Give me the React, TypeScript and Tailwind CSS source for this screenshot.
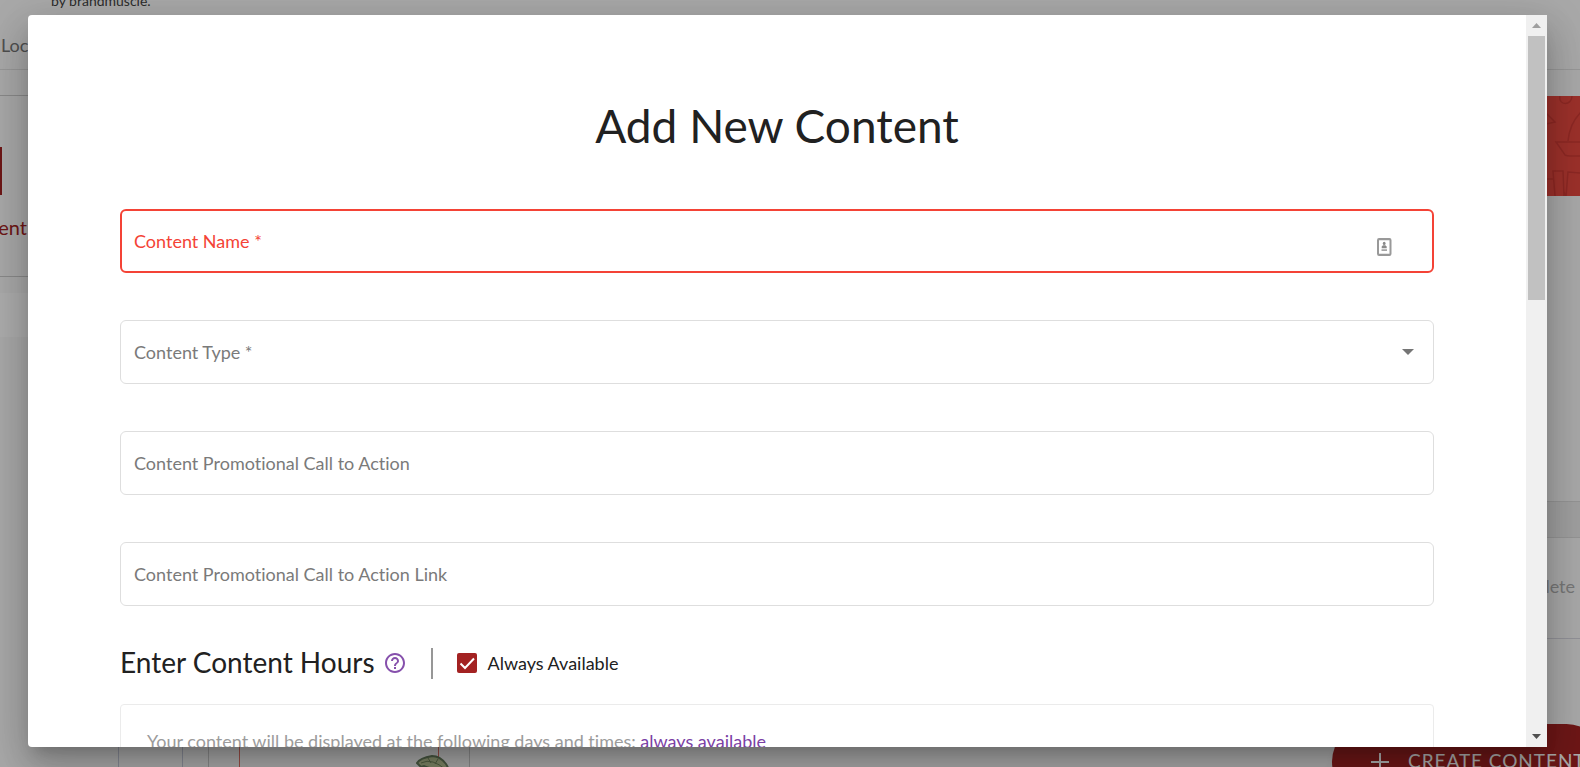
import type { ReactNode } from 'react';

export default function App() {
  return (
    <div className="relative h-screen overflow-hidden bg-[#fafafa] font-['Lato',sans-serif] text-[#212121] [font-variant-ligatures:none]">
      <Backdrop />
      <div className="absolute inset-0 flex bg-black/32 pt-[15px] pr-[33px] pb-5 pl-7">
        <ContentDialog />
      </div>
    </div>
  );
}

const ContentDialog = () => (
  <div
    role="dialog"
    aria-labelledby="dialog-title"
    className="flex min-w-0 flex-1 overflow-hidden rounded-l bg-white shadow-[0_11px_15px_-7px_rgba(0,0,0,0.2),0_24px_38px_3px_rgba(0,0,0,0.14),0_9px_46px_8px_rgba(0,0,0,0.12)]"
  >
    <form className="min-w-0 flex-1 overflow-hidden px-[92px] pt-[79px]">
      <h1 id="dialog-title" className="mb-[51px] text-center text-[46px] leading-16">
        Add New Content
      </h1>
      <div className="flex flex-col gap-[47px]">
        <Field id="name" label="Content Name *" error>
          <input id="name" className="min-w-0 flex-1 outline-none" />
          <ContactIcon />
        </Field>
        <Field id="type" label="Content Type *">
          <select id="type" defaultValue="" className="min-w-0 flex-1 appearance-none outline-none">
            <option value="" />
            <option value="promotion">Promotion</option>
          </select>
          <svg viewBox="0 0 12 6" className="mr-[6px] h-[6px] w-3 fill-[#757575]">
            <path d="M0 0h12L6 6z" />
          </svg>
        </Field>
        <Field id="cta" label="Content Promotional Call to Action">
          <input id="cta" className="min-w-0 flex-1 outline-none" />
        </Field>
        <Field id="cta-link" label="Content Promotional Call to Action Link">
          <input id="cta-link" className="min-w-0 flex-1 outline-none" />
        </Field>
      </div>
      <div className="mt-9 flex h-[42px] items-center">
        <h2 className="pb-[2px] text-[28px] leading-8">Enter Content Hours</h2>
        <button type="button" aria-label="Help" className="ml-2">
          <svg viewBox="0 0 24 24" className="size-6 fill-[#8650ac]">
            <path d="M11 18h2v-2h-2v2zm1-16C6.48 2 2 6.48 2 12s4.48 10 10 10 10-4.48 10-10S17.52 2 12 2zm0 18c-4.41 0-8-3.59-8-8s3.59-8 8-8 8 3.59 8 8-3.59 8-8 8zm0-14c-2.21 0-4 1.79-4 4h2c0-1.1.9-2 2-2s2 .9 2 2c0 2-3 1.75-3 5h2c0-2.25 3-2.5 3-5 0-2.21-1.79-4-4-4z" />
          </svg>
        </button>
        <div className="mx-6 h-[31px] w-[2px] bg-[#979797]" />
        <label className="flex items-center gap-[11px] text-[18px]">
          <span className="relative flex size-5">
            <input type="checkbox" defaultChecked className="size-5 appearance-none rounded-[2px] bg-[#a32222]" />
            <svg viewBox="0 0 20 20" className="pointer-events-none absolute inset-0 fill-none stroke-white stroke-2">
              <path d="M3.5 10.5l4.5 4.5 9-9.5" />
            </svg>
          </span>
          Always Available
        </label>
      </div>
      <div className="mt-5 h-40 rounded border border-[#ebebeb] px-[26px] pt-[22px] text-[18px] leading-7 text-[#9b9b9b]">
        Your content will be displayed at the following days and times:{' '}
        <a href="#hours" className="text-[#7b3fa5]">
          always available
        </a>
      </div>
    </form>
    <div className="flex w-[21px] flex-col items-center bg-[#f0f0f0]">
      <button type="button" aria-label="Scroll up" className="flex h-[21px] items-center">
        <svg viewBox="0 0 9 5" className="h-[5px] w-[9px] fill-[#9f9f9f]">
          <path d="M0 5h9L4.500 0z" />
        </svg>
      </button>
      <div className="h-[264px] w-[17px] bg-[#c1c1c1]" />
      <button type="button" aria-label="Scroll down" className="mt-auto flex h-[21px] items-center">
        <svg viewBox="0 0 9 5" className="h-[5px] w-[9px] fill-[#505050]">
          <path d="M0 0h9L4.500 5z" />
        </svg>
      </button>
    </div>
  </div>
);

type FieldProps = { id: string; label: string; error?: boolean; children: ReactNode };

const Field = ({ id, label, error, children }: FieldProps) => (
  <div
    className={
      error
        ? 'flex h-16 items-center gap-3 rounded-md border-2 border-[#f44336] px-3 text-[18px] text-[#f44336]'
        : 'flex h-16 items-center gap-3 rounded-md border border-[#dedede] px-[13px] text-[18px] text-[#7a7a7a]'
    }
  >
    <label htmlFor={id}>{label}</label>
    {children}
  </div>
);

const ContactIcon = () => (
  <svg viewBox="0 0 16 16" className="mt-3 mr-7 h-[18px] w-4" preserveAspectRatio="none">
    <rect x="2" y="1" width="12.500" height="14" rx="1" className="fill-white stroke-[#999999] stroke-2" />
    <circle cx="8.200" cy="4.800" r="1.400" className="fill-[#8a8a8a]" />
    <path d="M5.700 9V7.600L7 6.500h2.400l1.300 1.100V9z" className="fill-[#8a8a8a]" />
    <path d="M5.500 10.800h5.500" className="stroke-[#a5a5a5] stroke-[1.500]" />
  </svg>
);

const Backdrop = () => (
  <div className="flex h-full flex-col">
    <header className="flex h-[70px] flex-col justify-between border-b border-[#e0e0e0] pb-3">
      <p className="-mt-2 pl-[51px] text-[14px] leading-[18px] text-[#424242]">by brandmuscle.</p>
      <p className="pl-[1px] text-[18px] leading-6 text-[#757575]">Locations</p>
    </header>
    <div className="flex flex-1 pt-[25px]">
      <aside className="w-14">
        <div className="h-[182px] border-y border-[#cccccc] pt-[51px]">
          <div className="h-12 w-[2px] bg-[#a32222]" />
          <p className="mt-[18px] flex w-[27px] justify-end overflow-hidden text-[20px] leading-7 text-[#a32222]">Content</p>
        </div>
        <div className="mt-4 h-11 bg-white" />
      </aside>
      <main className="flex flex-1 flex-col pt-px">
        <Banner />
        <div className="mt-[305px] h-[37px] border-y border-[#dcdcdc] bg-[#ececec]" />
        <div className="flex h-[101px] items-center justify-end border-b border-[#d8d8e0] pr-[5px] pb-[3px] text-[18px] text-[#b0b0b0]">
          Delete
        </div>
        <div className="flex flex-1 pl-[62px]">
          <div className="w-[65px] border-x border-[#c8ccdc]" />
          <div className="ml-[25px] flex w-[262px] justify-center border-x border-[#cccccc]">
            <div className="flex w-[200px] items-end justify-end border-x border-[#e57368]">
              <Salad />
            </div>
          </div>
        </div>
      </main>
    </div>
    <button
      type="button"
      className="absolute -right-6 -bottom-8 flex h-[75px] w-[272px] items-center gap-4 rounded-full bg-[#a32222] pl-9 text-[19px] tracking-wider whitespace-nowrap text-white shadow-lg"
    >
      <svg viewBox="0 0 24 24" className="size-6 fill-none stroke-current stroke-2">
        <path d="M12 3v18M3 12h18" />
      </svg>
      CREATE CONTENT
    </button>
  </div>
);

const Banner = () => (
  <div className="flex h-[100px] justify-end bg-[#e84940]">
    <svg viewBox="0 0 34 100" className="h-[100px] w-[34px] fill-none stroke-[#d03c35] stroke-[1.500]">
      <path d="M0 17l9 9-9 2M14 0c-2 10 12 10 12 0M22 45c1-12 6-22 13-29M34 46H10l9 13q2 1 5 1h10" />
      <path d="M0 83h7M9 100L7 75h10l1 25M20 100l2-24 12 1M18 96l2 4" />
    </svg>
  </div>
);

const Salad = () => (
  <svg viewBox="0 0 34 20" className="-mr-3 -mb-2 h-5 w-[34px]">
    <path d="M1 8q3-5 15-7 8 0 14 8 3 4 3 11H11l2-7-5-2-3 1z" className="fill-[#b9c495] stroke-[#6a8060] stroke-2" />
    <path d="M5 8q6-3 12-1t12 7M12 3l3 5M22 4l-3 5M14 14q6-3 12 2" className="fill-none stroke-[#74895f] stroke-1" />
  </svg>
);
